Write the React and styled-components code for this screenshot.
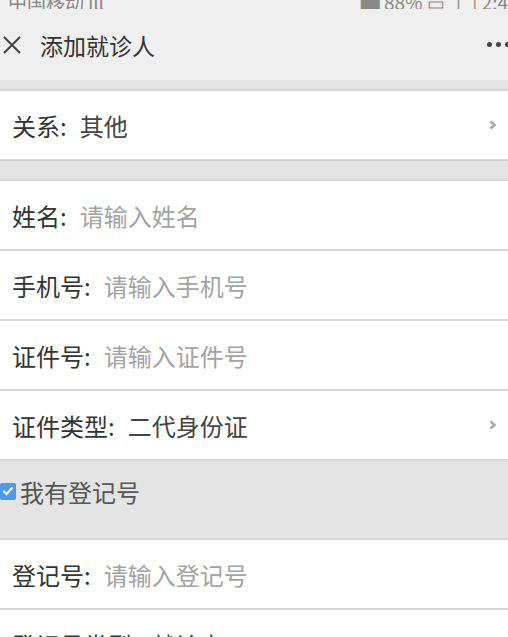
import React from "react";
import styled, { createGlobalStyle } from "styled-components";

const Global = createGlobalStyle`
  html, body { margin: 0; padding: 0; }
  body {
    background: #e4e4e4;
    font-family: "Noto Sans CJK SC", "Noto Sans", sans-serif;
    overflow: hidden;
  }
`;

const Page = styled.div`
  width: 508px;
  height: 637px;
  overflow: hidden;
  background: #e4e4e4;
`;

const StatusBar = styled.div`
  height: 9px;
  background: #efefef;
  display: flex;
  justify-content: space-between;
  align-items: flex-end;
  overflow: hidden;
  padding: 0 0 0 8px;
  color: #888;
  font-size: 19px;
  line-height: 19px;
`;

const StatusText = styled.span`
  display: block;
  white-space: nowrap;
  margin-bottom: -2px;
`;

const NavBar = styled.div`
  height: 71px;
  background: #efefef;
  display: flex;
  align-items: center;
  padding: 0 0 0 2px;
`;

const Title = styled.div`
  font-size: 23px;
  color: #333;
  margin-left: 18px;
  flex: 1;
`;

const More = styled.div`
  display: flex;
  gap: 4px;
  margin-right: -2px;
  span {
    width: 5px;
    height: 5px;
    border-radius: 50%;
    background: #444;
  }
`;

const Band = styled.div`
  height: ${(p) => p.$h}px;
  background: #e4e4e4;
`;

const Group = styled.div`
  border-top: 2px solid #d6d6d6;
  background: #fff;
`;

const Row = styled.div`
  height: 68px;
  border-bottom: 2px solid #d6d6d6;
  display: flex;
  align-items: center;
  padding: 0 11px 0 12px;
  font-size: 24px;
  background: #fff;
`;

const Label = styled.span`
  color: #333;
`;

const Value = styled.span`
  color: ${(p) => (p.$placeholder ? "#a3a3a3" : "#444")};
  margin-left: 13px;
  flex: 1;
`;

const CheckRow = styled.div`
  height: 77px;
  box-sizing: border-box;
  padding-bottom: 17px;
  background: #e4e4e4;
  display: flex;
  align-items: center;
  gap: 4px;
  font-size: 24px;
  color: #555;
`;

const CheckBox = styled.span`
  width: 16px;
  height: 17px;
  border-radius: 2px;
  background: #4b9be8;
  display: flex;
  align-items: center;
  justify-content: center;
`;

const Chevron = () => (
  <svg width="8" height="10" viewBox="0 0 8 10">
    <path d="M1.5 1.5 L5.5 5 L1.5 8.5" fill="none" stroke="#aaa" strokeWidth="2.6" strokeLinejoin="miter" />
  </svg>
);

const Close = () => (
  <svg width="20" height="20" viewBox="0 0 20 20">
    <path d="M2 2 L18 18 M18 2 L2 18" stroke="#444" strokeWidth="2" />
  </svg>
);

const Field = ({ label, value, placeholder, arrow }) => (
  <Row>
    <Label>{label}:</Label>
    <Value $placeholder={!!placeholder}>{placeholder || value}</Value>
    {arrow && <Chevron />}
  </Row>
);

export default function App() {
  return (
    <Page>
      <Global />
      <StatusBar>
        <StatusText>中国移动 ıll</StatusText>
        <StatusText>▆ 88% ▭ ↑ | 2:4</StatusText>
      </StatusBar>
      <NavBar>
        <Close />
        <Title>添加就诊人</Title>
        <More><span /><span /><span /></More>
      </NavBar>
      <Band $h={9} />
      <Group>
        <Field label="关系" value="其他" arrow />
      </Group>
      <Band $h={18} />
      <Group>
        <Field label="姓名" placeholder="请输入姓名" />
        <Field label="手机号" placeholder="请输入手机号" />
        <Field label="证件号" placeholder="请输入证件号" />
        <Field label="证件类型" value="二代身份证" arrow />
      </Group>
      <CheckRow>
        <CheckBox>
          <svg width="12" height="10" viewBox="0 0 12 10">
            <path d="M1.5 5 L4.5 8 L10.5 1.5" fill="none" stroke="#fff" strokeWidth="2" />
          </svg>
        </CheckBox>
        我有登记号
      </CheckRow>
      <Group>
        <Field label="登记号" placeholder="请输入登记号" />
        <Field label="登记号类型" value="就诊卡" arrow />
      </Group>
    </Page>
  );
}
